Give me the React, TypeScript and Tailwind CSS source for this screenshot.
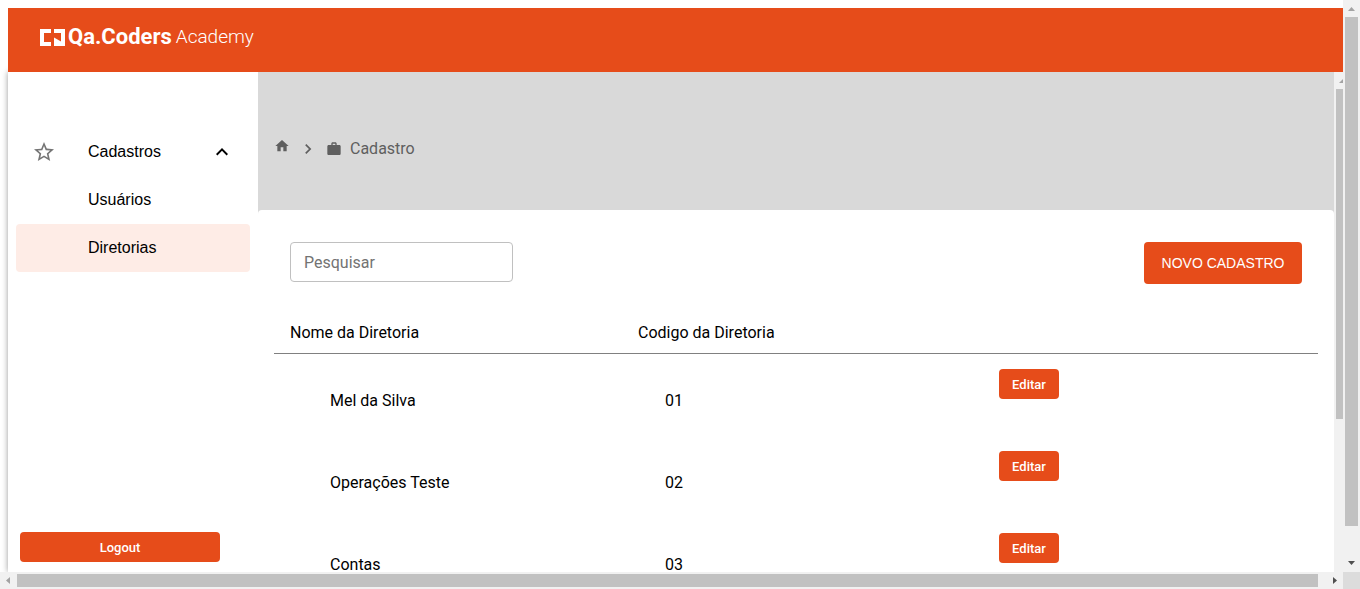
import React from "react";
import { MdChevronRight, MdExpandLess, MdHome, MdStarBorder, MdWork } from "react-icons/md";

const directorates = [
  { name: "Mel da Silva", code: "01" },
  { name: "Operações Teste", code: "02" },
  { name: "Contas", code: "03" },
];

function Logo() {
  return (
    <a href="#inicio" className="flex items-center text-white">
      <svg width="25" height="17" viewBox="0 0 25 17" fill="currentColor" aria-hidden="true">
        <path d="M0 0H11V4H4V13H11V17H0Z" />
        <path d="M14 0H25V17H14V8.4L21 12.4V4H14Z" />
      </svg>
      <span className="ml-[3px] text-[22px] font-bold leading-6">Qa.Coders</span>
      <span className="ml-1 text-[19px] font-light leading-6">Academy</span>
    </a>
  );
}

function Sidebar() {
  return (
    <aside className="flex w-[250px] shrink-0 flex-col bg-white px-2 pt-14 pb-[10px] font-['Liberation_Sans',sans-serif] text-base shadow-[0_0_6px_rgba(0,0,0,0.4)]">
      <nav className="flex flex-col">
        <button type="button" className="flex h-12 items-center px-4 text-left" aria-expanded="true">
          <MdStarBorder size={24} className="mr-8 text-[#757575]" />
          <span className="flex-1">Cadastros</span>
          <MdExpandLess size={24} />
        </button>
        <a href="#usuarios" className="flex h-12 items-center pl-[72px]">Usuários</a>
        <a href="#diretorias" className="flex h-12 items-center rounded bg-[#feece6] pl-[72px]">Diretorias</a>
      </nav>
      <button type="button" className="mt-auto ml-1 h-[30px] w-[200px] rounded bg-[#e64c1a] pt-[2px] font-['Roboto',sans-serif] text-[13px] font-medium text-white">
        Logout
      </button>
    </aside>
  );
}

function Breadcrumb() {
  return (
    <nav aria-label="Trilha" className="flex h-[138px] items-center px-4 pt-4 text-[#5f5f5f]">
      <a href="#inicio" aria-label="Início" className="pb-[6px]">
        <MdHome size={16} />
      </a>
      <MdChevronRight size={20} className="mx-2" />
      <a href="#cadastro" className="flex items-center gap-2">
        <MdWork size={16} />
        Cadastro
      </a>
    </nav>
  );
}

function DirectorateTable() {
  return (
    <table className="mt-7 w-full table-fixed border-separate border-spacing-0 text-left">
      <thead>
        <tr>
          <th className="h-[42px] border-b border-[#808080] px-4 font-normal">Nome da Diretoria</th>
          <th className="border-b border-[#808080] px-4 font-normal">Codigo da Diretoria</th>
          <th className="border-b border-[#808080]" aria-label="Ações" />
        </tr>
      </thead>
      <tbody>
        {directorates.map((row) => (
          <tr key={row.code} className="h-[82px] align-top">
            <td className="pt-[35px] pl-14">{row.name}</td>
            <td className="pt-[35px] pl-[43px]">{row.code}</td>
            <td className="pt-[15px] pl-[29px]">
              <button type="button" className="block h-[30px] w-[60px] rounded bg-[#e64c1a] pt-[2px] text-[13px] font-medium text-white">
                Editar
              </button>
            </td>
          </tr>
        ))}
      </tbody>
    </table>
  );
}

export default function App() {
  return (
    <div className="flex h-screen flex-col overflow-hidden bg-white font-['Roboto',sans-serif] text-base text-black">
      <div className="flex min-h-0 flex-1">
        <div className="flex min-w-0 flex-1 flex-col overflow-hidden pt-2 pl-2">
          <header className="z-10 flex h-16 shrink-0 items-center bg-[#e64c1a] px-8 pb-[6px]">
            <Logo />
          </header>
          <div className="flex min-h-0 flex-1">
            <Sidebar />
            <main className="z-10 min-w-0 flex-1 overflow-hidden bg-[#d9d9d9]">
              <Breadcrumb />
              <section className="rounded-t bg-white px-4 pt-8">
                <div className="flex items-start justify-between px-4">
                  <input
                    type="search"
                    aria-label="Pesquisar"
                    placeholder="Pesquisar"
                    className="h-10 w-[223px] rounded border border-[#c0c0c0] px-[13px] placeholder:text-[#737373]"
                  />
                  <button type="button" className="h-[42px] w-[158px] rounded bg-[#e64c1a] font-['Liberation_Sans',sans-serif] text-sm text-white">
                    NOVO CADASTRO
                  </button>
                </div>
                <DirectorateTable />
              </section>
            </main>
            <div className="z-10 flex w-[9px] shrink-0 flex-col overflow-hidden bg-[#f1f1f1] pl-[2px]" aria-hidden="true">
              <svg width="7" height="17" viewBox="0 0 7 17" fill="#a3a3a3">
                <path d="M7 7V11H3Z" />
              </svg>
              <div className="h-[330px] bg-[#c1c1c1]" />
            </div>
          </div>
        </div>
        <div className="flex w-[17px] shrink-0 flex-col bg-[#f1f1f1]" aria-hidden="true">
          <svg width="17" height="17" viewBox="0 0 17 17" fill="#a3a3a3">
            <path d="M5 11L8.5 7L12 11Z" />
          </svg>
          <div className="mr-[2px] ml-[2px] h-[509px] bg-[#c1c1c1]" />
          <svg width="17" height="17" viewBox="0 0 17 17" fill="#505050" className="mt-auto">
            <path d="M5 6L8.5 10L12 6Z" />
          </svg>
        </div>
      </div>
      <div className="flex h-[17px] shrink-0 bg-[#f1f1f1]" aria-hidden="true">
        <svg width="17" height="17" viewBox="0 0 17 17" fill="#a3a3a3" className="shrink-0">
          <path d="M10 5L6 8.5L10 12Z" />
        </svg>
        <div className="my-[2px] mr-2 flex-1 bg-[#c1c1c1]" />
        <svg width="17" height="17" viewBox="0 0 17 17" fill="#505050" className="shrink-0">
          <path d="M7 5L11 8.5L7 12Z" />
        </svg>
        <div className="w-[17px] shrink-0 bg-[#dcdcdc]" />
      </div>
    </div>
  );
}
